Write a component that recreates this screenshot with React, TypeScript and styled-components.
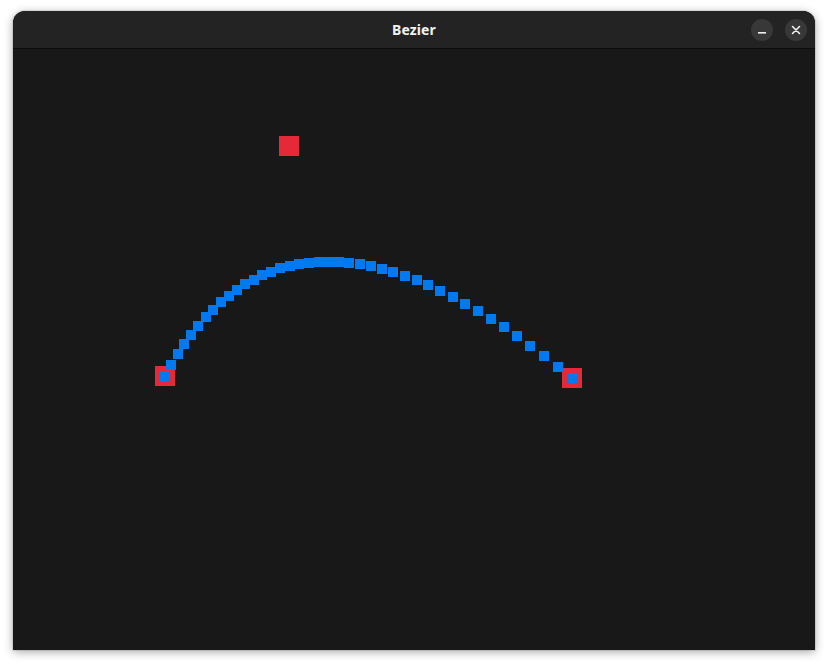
import React from "react";
import styled, { createGlobalStyle } from "styled-components";

const Global = createGlobalStyle`
  html, body { margin: 0; padding: 0; background: #ffffff; }
  body { font-family: "Noto Sans", "DejaVu Sans", sans-serif; }
`;

const Page = styled.div`
  padding: 11px 13px;
`;

const Window = styled.div`
  width: 802px;
  height: 639px;
  display: flex;
  flex-direction: column;
  border-radius: 12px 12px 0 0;
  overflow: hidden;
  background: #181818;
  box-shadow: 0 2px 10px rgba(0, 0, 0, 0.35), 0 0 0 1px rgba(0, 0, 0, 0.08);
`;

const TitleBar = styled.div`
  height: 37px;
  flex: none;
  background: #232323;
  border-bottom: 1px solid #0c0c0c;
  display: grid;
  grid-template-columns: 1fr auto 1fr;
  align-items: center;
  padding: 0 8px 0 8px;
`;

const Title = styled.div`
  grid-column: 2;
  color: #f2f2f2;
  font-weight: 700;
  font-size: 14px;
  letter-spacing: 0.1px;
`;

const Controls = styled.div`
  grid-column: 3;
  justify-self: end;
  display: flex;
  gap: 12px;
  align-items: center;
`;

const RoundButton = styled.div`
  width: 22px;
  height: 22px;
  border-radius: 50%;
  background: #383838;
  display: flex;
  align-items: center;
  justify-content: center;
`;

const Canvas = styled.div`
  flex: 1;
  background: #181818;
`;

const OX = 13;
const OY = 49;
const P0 = { x: 165, y: 376 };
const P1 = { x: 289, y: 146 };
const P2 = { x: 572, y: 378 };

function curvePoints() {
  const pts: { x: number; y: number }[] = [];
  for (let i = 0; i <= 40; i++) {
    const t = i / 40;
    const a = (1 - t) * (1 - t);
    const b = 2 * t * (1 - t);
    const c = t * t;
    pts.push({
      x: a * P0.x + b * P1.x + c * P2.x,
      y: a * P0.y + b * P1.y + c * P2.y,
    });
  }
  return pts;
}

const RED = "#e62937";
const BLUE = "#0079f1";

export default function App() {
  const pts = curvePoints();
  return (
    <>
      <Global />
      <Page>
        <Window>
          <TitleBar>
            <Title>Bezier</Title>
            <Controls>
              <RoundButton>
                <svg width="10" height="10" viewBox="0 0 10 10">
                  <rect x="1" y="7" width="8" height="1.6" fill="#f0f0f0" />
                </svg>
              </RoundButton>
              <RoundButton>
                <svg width="10" height="10" viewBox="0 0 10 10">
                  <path d="M1.5 1.5 L8.5 8.5 M8.5 1.5 L1.5 8.5" stroke="#f0f0f0" strokeWidth="1.6" strokeLinecap="round" />
                </svg>
              </RoundButton>
            </Controls>
          </TitleBar>
          <Canvas>
            <svg width="802" height="601" viewBox={`${OX} ${OY} 802 601`} shapeRendering="crispEdges">
              {[P0, P1, P2].map((p, i) => (
                <rect key={"c" + i} x={p.x - 10} y={p.y - 10} width="20" height="20" fill={RED} />
              ))}
              {pts.map((p, i) => (
                <rect key={i} x={Math.round(p.x - 5)} y={Math.round(p.y - 5)} width="10" height="10" fill={BLUE} />
              ))}
            </svg>
          </Canvas>
        </Window>
      </Page>
    </>
  );
}
